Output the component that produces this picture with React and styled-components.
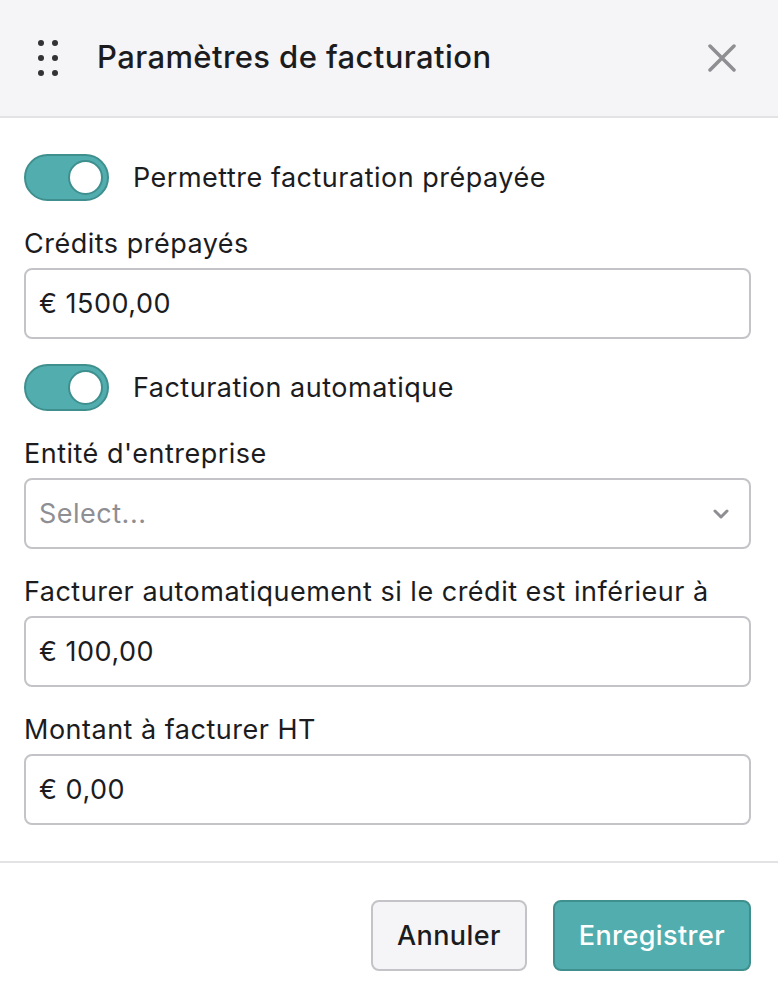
import React from "react";
import styled, { createGlobalStyle } from "styled-components";

const GlobalStyle = createGlobalStyle`
  html, body { margin: 0; padding: 0; background: #ffffff; }
  body { font-family: Inter, "Noto Sans", sans-serif; color: #1c1c1e; }
  * { box-sizing: border-box; }
`;

const Panel = styled.div`
  width: 778px;
  min-height: 1004px;
  display: flex;
  flex-direction: column;
  background: #ffffff;
`;

const Header = styled.header`
  height: 118px;
  display: flex;
  align-items: center;
  padding: 0 40px 4px 36px;
  background: #f5f5f7;
  border-bottom: 2px solid #e3e3e5;
`;

const Handle = styled.svg`
  width: 24px;
  height: 40px;
  flex: none;
  margin-top: 4px;
`;

const Title = styled.h1`
  margin: 0 0 0 37px;
  flex: 1;
  font-size: 31px;
  font-weight: 500;
  letter-spacing: 0.4px;
  color: #1c1c1e;
`;

const CloseButton = styled.button`
  border: 0;
  background: none;
  padding: 0;
  margin-top: 4px;
  width: 32px;
  height: 32px;
  display: flex;
  align-items: center;
  justify-content: center;
  cursor: pointer;
`;

const Body = styled.div`
  display: flex;
  flex-direction: column;
  gap: 25px;
  padding: 36px 27px 36px 24px;
  border-bottom: 2px solid #e3e3e5;
`;

const ToggleRow = styled.label`
  display: flex;
  align-items: center;
  gap: 24px;
  font-size: 27px;
  letter-spacing: 0.5px;
  line-height: 36px;
  color: #1c1c1e;
`;

const Track = styled.span`
  position: relative;
  width: 85px;
  height: 47px;
  flex: none;
  border-radius: 24px;
  background: ${(p) => (p.$on ? "#52aeae" : "#d1d1d6")};
  border: 2px solid ${(p) => (p.$on ? "#3f8f8f" : "#b8b8bd")};
`;

const Knob = styled.span`
  position: absolute;
  top: 4px;
  left: ${(p) => (p.$on ? "42px" : "4px")};
  width: 35px;
  height: 35px;
  border-radius: 50%;
  background: #ffffff;
  border: 2px solid #3f8f8f;
`;

const Field = styled.div`
  display: flex;
  flex-direction: column;
  gap: 6px;
`;

const Label = styled.span`
  font-size: 27px;
  letter-spacing: 0.5px;
  line-height: 36px;
  color: #1c1c1e;
`;

const InputBox = styled.div`
  height: 71px;
  display: flex;
  align-items: center;
  justify-content: space-between;
  padding: 0 20px 0 13px;
  border: 2px solid #c4c4c8;
  border-radius: 8px;
  background: #ffffff;
  font-size: 27px;
  letter-spacing: 0.5px;
  color: ${(p) => (p.$placeholder ? "#8e8e93" : "#1c1c1e")};
`;

const Footer = styled.footer`
  display: flex;
  justify-content: flex-end;
  gap: 26px;
  padding: 37px 27px 33px 24px;
`;

const Button = styled.button`
  height: 71px;
  padding: 0 24px;
  border-radius: 8px;
  font-family: Inter, "Noto Sans", sans-serif;
  font-size: 27px;
  letter-spacing: 0.4px;
  font-weight: 500;
  cursor: pointer;
  border: 2px solid ${(p) => (p.$primary ? "#3f8f8f" : "#c4c4c8")};
  background: ${(p) => (p.$primary ? "#52aeae" : "#f5f5f7")};
  color: ${(p) => (p.$primary ? "#ffffff" : "#1c1c1e")};
`;

function Toggle({ on, children }) {
  return (
    <ToggleRow>
      <Track $on={on}>
        <Knob $on={on} />
      </Track>
      {children}
    </ToggleRow>
  );
}

function MoneyField({ label, value }) {
  return (
    <Field>
      <Label>{label}</Label>
      <InputBox>{value}</InputBox>
    </Field>
  );
}

export default function App() {
  return (
    <>
      <GlobalStyle />
      <Panel>
        <Header>
          <Handle viewBox="0 0 24 40">
            {[5, 20, 35].map((y) => (
              <g key={y} fill="#333336">
                <circle cx="5" cy={y} r="3" />
                <circle cx="19" cy={y} r="3" />
              </g>
            ))}
          </Handle>
          <Title>Paramètres de facturation</Title>
          <CloseButton aria-label="Fermer">
            <svg width="28" height="28" viewBox="0 0 28 28">
              <path
                d="M2 2 L26 26 M26 2 L2 26"
                stroke="#8e8e93"
                strokeWidth="3.5"
                strokeLinecap="round"
              />
            </svg>
          </CloseButton>
        </Header>

        <Body>
          <Toggle on>Permettre facturation prépayée</Toggle>
          <MoneyField label="Crédits prépayés" value="€ 1500,00" />
          <Toggle on>Facturation automatique</Toggle>
          <Field>
            <Label>Entité d'entreprise</Label>
            <InputBox $placeholder>
              Select...
              <svg width="16" height="10" viewBox="0 0 16 10">
                <path
                  d="M2 2 L8 8 L14 2"
                  fill="none"
                  stroke="#8e8e93"
                  strokeWidth="3"
                  strokeLinecap="round"
                  strokeLinejoin="round"
                />
              </svg>
            </InputBox>
          </Field>
          <MoneyField
            label="Facturer automatiquement si le crédit est inférieur à"
            value="€ 100,00"
          />
          <MoneyField label="Montant à facturer HT" value="€ 0,00" />
        </Body>

        <Footer>
          <Button>Annuler</Button>
          <Button $primary>Enregistrer</Button>
        </Footer>
      </Panel>
    </>
  );
}
